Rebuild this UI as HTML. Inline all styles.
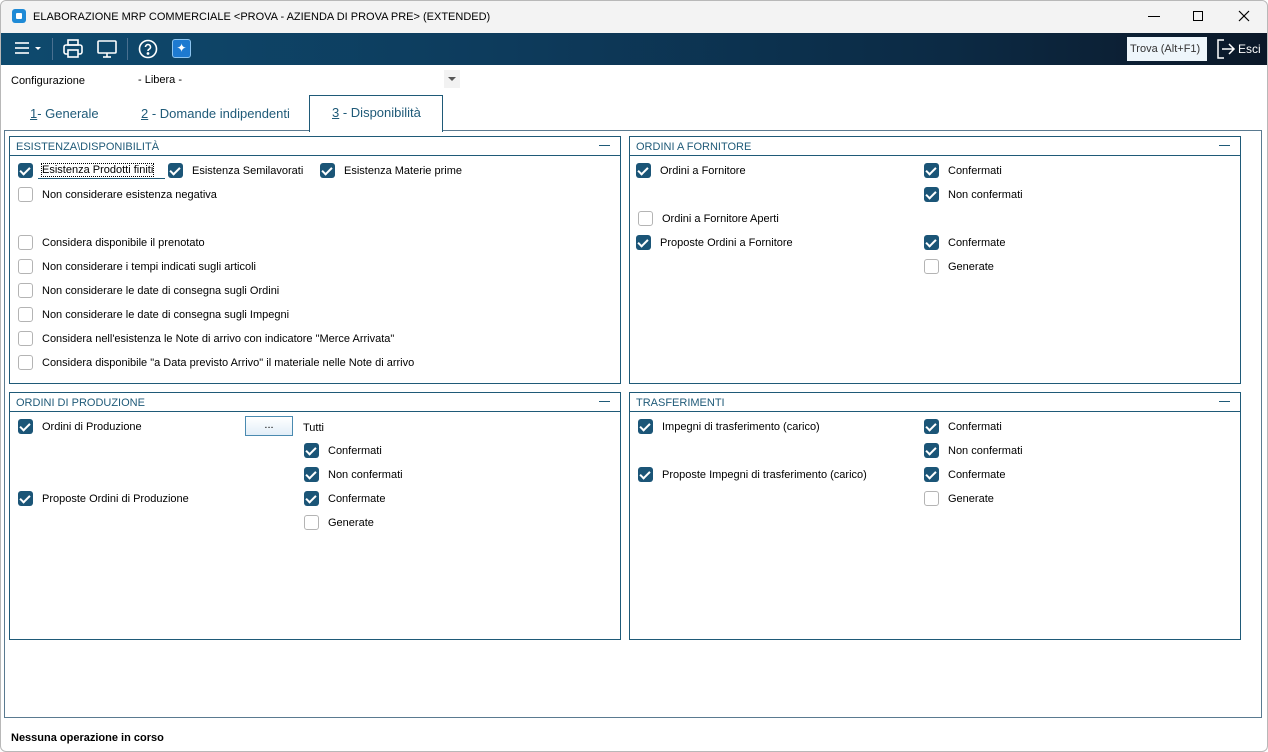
<!DOCTYPE html><html><head><style>
*{margin:0;padding:0;box-sizing:border-box}
body{width:1268px;height:752px;background:#fff;font-family:"Liberation Sans",sans-serif;font-size:11px;color:#000;position:relative;overflow:hidden}
.a{position:absolute}
.win{left:0;top:0;width:1268px;height:752px;border:1px solid #b8b8b8;border-radius:6px;background:#fff}
.title{left:1px;top:1px;width:1266px;height:32px;background:#f3f3f3;border-radius:6px 6px 0 0}
.tb{left:1px;top:33px;width:1266px;height:32px;background:linear-gradient(90deg,#0e4a6e 0%,#0d3b5c 40%,#0c2a44 75%,#0b1828 100%)}
.grp{border:1px solid #1f5a78;background:#fff}
.gh{position:absolute;left:0;top:0;right:0;height:19px;border-bottom:1px solid #1f5a78;color:#1f5a78;font-size:11px;padding:4px 0 0 6px}
.gh b{position:absolute;right:10px;top:8px;width:11px;height:1px;background:#1f5a78}
.cb{position:absolute;width:15px;height:15px;border-radius:3px;background:#1b5577}
.cb:after{content:"";position:absolute;left:4px;top:1.5px;width:4px;height:8px;border:solid #fff;border-width:0 2px 2px 0;transform:rotate(45deg)}
.ub{position:absolute;width:15px;height:15px;border-radius:3px;border:1px solid #b4b4b4;background:#fff}
.t{position:absolute;white-space:nowrap;padding-top:1px}
.tab{position:absolute;top:106px;font-size:13px;color:#1f5a78}
</style></head><body>
<div class="a win"></div>
<div class="a title"></div>
<div class="a" style="left:12px;top:9px;width:14px;height:14px;background:#1e8ad6;border-radius:3px"><div class="a" style="left:4px;top:4px;width:6px;height:6px;background:#fff;border-radius:1px"></div></div>
<div class="t" style="left:33px;top:10px;font-size:11px">ELABORAZIONE MRP COMMERCIALE &lt;PROVA - AZIENDA DI PROVA PRE&gt; (EXTENDED)</div>
<div class="a" style="left:1148px;top:16px;width:12px;height:1px;background:#000"></div>
<div class="a" style="left:1193px;top:11px;width:10px;height:10px;border:1px solid #000"></div>
<svg class="a" style="left:1238px;top:10px" width="12" height="12" stroke="#000" stroke-width="1.2"><line x1="1" y1="1" x2="11" y2="11"/><line x1="11" y1="1" x2="1" y2="11"/></svg>
<div class="a tb"></div>
<svg class="a" style="left:14px;top:40px" width="30" height="18"><g stroke="#fff" stroke-width="1.6"><line x1="1" y1="3" x2="15" y2="3"/><line x1="1" y1="8" x2="15" y2="8"/><line x1="1" y1="13" x2="15" y2="13"/></g><path d="M21 7h6l-3 3z" fill="#fff"/></svg>
<div class="a" style="left:52px;top:38px;width:1px;height:22px;background:#4a7090"></div>
<svg class="a" style="left:62px;top:38px" width="22" height="22" fill="none" stroke="#fff" stroke-width="1.6"><rect x="6" y="2" width="10" height="5"/><rect x="2" y="7" width="18" height="9" rx="2"/><rect x="6" y="12" width="10" height="7" fill="#0e4a6e"/></svg>
<svg class="a" style="left:96px;top:38px" width="22" height="22" fill="none" stroke="#fff" stroke-width="1.6"><rect x="2" y="3" width="18" height="12" rx="1"/><line x1="11" y1="15" x2="11" y2="19"/><line x1="7" y1="19" x2="15" y2="19"/></svg>
<div class="a" style="left:127px;top:38px;width:1px;height:22px;background:#4a7090"></div>
<svg class="a" style="left:137px;top:38px" width="22" height="22" fill="none" stroke="#fff" stroke-width="1.6"><circle cx="11" cy="11" r="8.5"/><path d="M8.5 9a2.5 2.5 0 1 1 3.5 2.3c-.8.4-1 .9-1 1.7"/><circle cx="11" cy="15.5" r=".6" fill="#fff"/></svg>
<div class="a" style="left:172px;top:39px;width:19px;height:19px;background:#1e7ad0;border:1px solid #8cc4f0;border-radius:3px;color:#fff;font-size:12px;text-align:center;line-height:17px">✦</div>
<div class="a" style="left:1127px;top:37px;width:80px;height:24px;background:#eef6fb"></div>
<div class="t" style="left:1130px;top:42px;font-size:11px;color:#333">Trova (Alt+F1)</div>
<svg class="a" style="left:1215px;top:38px" width="22" height="22" fill="none" stroke="#fff" stroke-width="1.5"><path d="M9 2H3v18h6"/><path d="M7 11h12M14 6l5 5-5 5"/></svg>
<div class="t" style="left:1238px;top:41px;color:#fff;font-size:12px">Esci</div>
<div class="t" style="left:11px;top:74px">Configurazione</div>
<div class="t" style="left:138px;top:73px">- Libera -</div>
<div class="a" style="left:444px;top:70px;width:16px;height:18px;background:#f2f2f2"></div>
<div class="a" style="left:448px;top:77px;border:4px solid transparent;border-top:4px solid #555;border-bottom:0"></div>
<div class="tab" style="left:30px"><u>1</u>- Generale</div>
<div class="tab" style="left:141px"><u>2</u> - Domande indipendenti</div>
<div class="a" style="left:309px;top:95px;width:134px;height:37px;border:1px solid #1f5a78;border-bottom:none;background:#fff"></div>
<div class="a" style="left:4px;top:130px;width:1258px;height:588px;border:1px solid #5a7a90;border-top:none"></div>
<div class="a" style="left:4px;top:130px;width:305px;height:1px;background:#5a7a90"></div>
<div class="a" style="left:443px;top:130px;width:819px;height:1px;background:#5a7a90"></div>
<div class="tab" style="left:332px;top:105px"><u>3</u> - Disponibilità</div>

<div class="a grp" style="left:9px;top:136px;width:612px;height:248px"><div class="gh">ESISTENZA\DISPONIBILITÀ<b></b></div></div>
<div class="a grp" style="left:629px;top:136px;width:612px;height:248px"><div class="gh">ORDINI A FORNITORE<b></b></div></div>
<div class="a grp" style="left:9px;top:392px;width:612px;height:248px"><div class="gh">ORDINI DI PRODUZIONE<b></b></div></div>
<div class="a grp" style="left:629px;top:392px;width:612px;height:248px"><div class="gh">TRASFERIMENTI<b></b></div></div>

<div class="cb" style="left:18px;top:163px"></div><div class="t" style="left:42px;top:164px;outline:1px dotted #000;padding-top:0">Esistenza Prodotti finiti</div>
<div class="a" style="left:38px;top:178px;width:127px;height:1px;background:#1f5a78"></div>
<div class="cb" style="left:168px;top:163px"></div><div class="t" style="left:192px;top:164px">Esistenza Semilavorati</div>
<div class="cb" style="left:320px;top:163px"></div><div class="t" style="left:344px;top:164px">Esistenza Materie prime</div>
<div class="ub" style="left:18px;top:187px"></div><div class="t" style="left:42px;top:188px">Non considerare esistenza negativa</div>
<div class="ub" style="left:18px;top:235px"></div><div class="t" style="left:42px;top:236px">Considera disponibile il prenotato</div>
<div class="ub" style="left:18px;top:259px"></div><div class="t" style="left:42px;top:260px">Non considerare i tempi indicati sugli articoli</div>
<div class="ub" style="left:18px;top:283px"></div><div class="t" style="left:42px;top:284px">Non considerare le date di consegna sugli Ordini</div>
<div class="ub" style="left:18px;top:307px"></div><div class="t" style="left:42px;top:308px">Non considerare le date di consegna sugli Impegni</div>
<div class="ub" style="left:18px;top:331px"></div><div class="t" style="left:42px;top:332px">Considera nell'esistenza le Note di arrivo con indicatore "Merce Arrivata"</div>
<div class="ub" style="left:18px;top:355px"></div><div class="t" style="left:42px;top:356px">Considera disponibile "a Data previsto Arrivo" il materiale nelle Note di arrivo</div>

<div class="cb" style="left:636px;top:163px"></div><div class="t" style="left:660px;top:164px">Ordini a Fornitore</div>
<div class="cb" style="left:924px;top:163px"></div><div class="t" style="left:948px;top:164px">Confermati</div>
<div class="cb" style="left:924px;top:187px"></div><div class="t" style="left:948px;top:188px">Non confermati</div>
<div class="ub" style="left:638px;top:211px"></div><div class="t" style="left:662px;top:212px">Ordini a Fornitore Aperti</div>
<div class="cb" style="left:636px;top:235px"></div><div class="t" style="left:660px;top:236px">Proposte Ordini a Fornitore</div>
<div class="cb" style="left:924px;top:235px"></div><div class="t" style="left:948px;top:236px">Confermate</div>
<div class="ub" style="left:924px;top:259px"></div><div class="t" style="left:948px;top:260px">Generate</div>

<div class="cb" style="left:18px;top:419px"></div><div class="t" style="left:42px;top:420px">Ordini di Produzione</div>
<div class="a" style="left:245px;top:416px;width:48px;height:20px;border:1px solid #4a8ab0;background:linear-gradient(#fff,#e2eef8);text-align:center;font-size:11px;line-height:16px">...</div>
<div class="t" style="left:303px;top:421px">Tutti</div>
<div class="cb" style="left:304px;top:443px"></div><div class="t" style="left:328px;top:444px">Confermati</div>
<div class="cb" style="left:304px;top:467px"></div><div class="t" style="left:328px;top:468px">Non confermati</div>
<div class="cb" style="left:18px;top:491px"></div><div class="t" style="left:42px;top:492px">Proposte Ordini di Produzione</div>
<div class="cb" style="left:304px;top:491px"></div><div class="t" style="left:328px;top:492px">Confermate</div>
<div class="ub" style="left:304px;top:515px"></div><div class="t" style="left:328px;top:516px">Generate</div>

<div class="cb" style="left:638px;top:419px"></div><div class="t" style="left:662px;top:420px">Impegni di trasferimento (carico)</div>
<div class="cb" style="left:924px;top:419px"></div><div class="t" style="left:948px;top:420px">Confermati</div>
<div class="cb" style="left:924px;top:443px"></div><div class="t" style="left:948px;top:444px">Non confermati</div>
<div class="cb" style="left:638px;top:467px"></div><div class="t" style="left:662px;top:468px">Proposte Impegni di trasferimento (carico)</div>
<div class="cb" style="left:924px;top:467px"></div><div class="t" style="left:948px;top:468px">Confermate</div>
<div class="ub" style="left:924px;top:491px"></div><div class="t" style="left:948px;top:492px">Generate</div>

<div class="t" style="left:11px;top:731px;font-weight:bold">Nessuna operazione in corso</div>
</body></html>
